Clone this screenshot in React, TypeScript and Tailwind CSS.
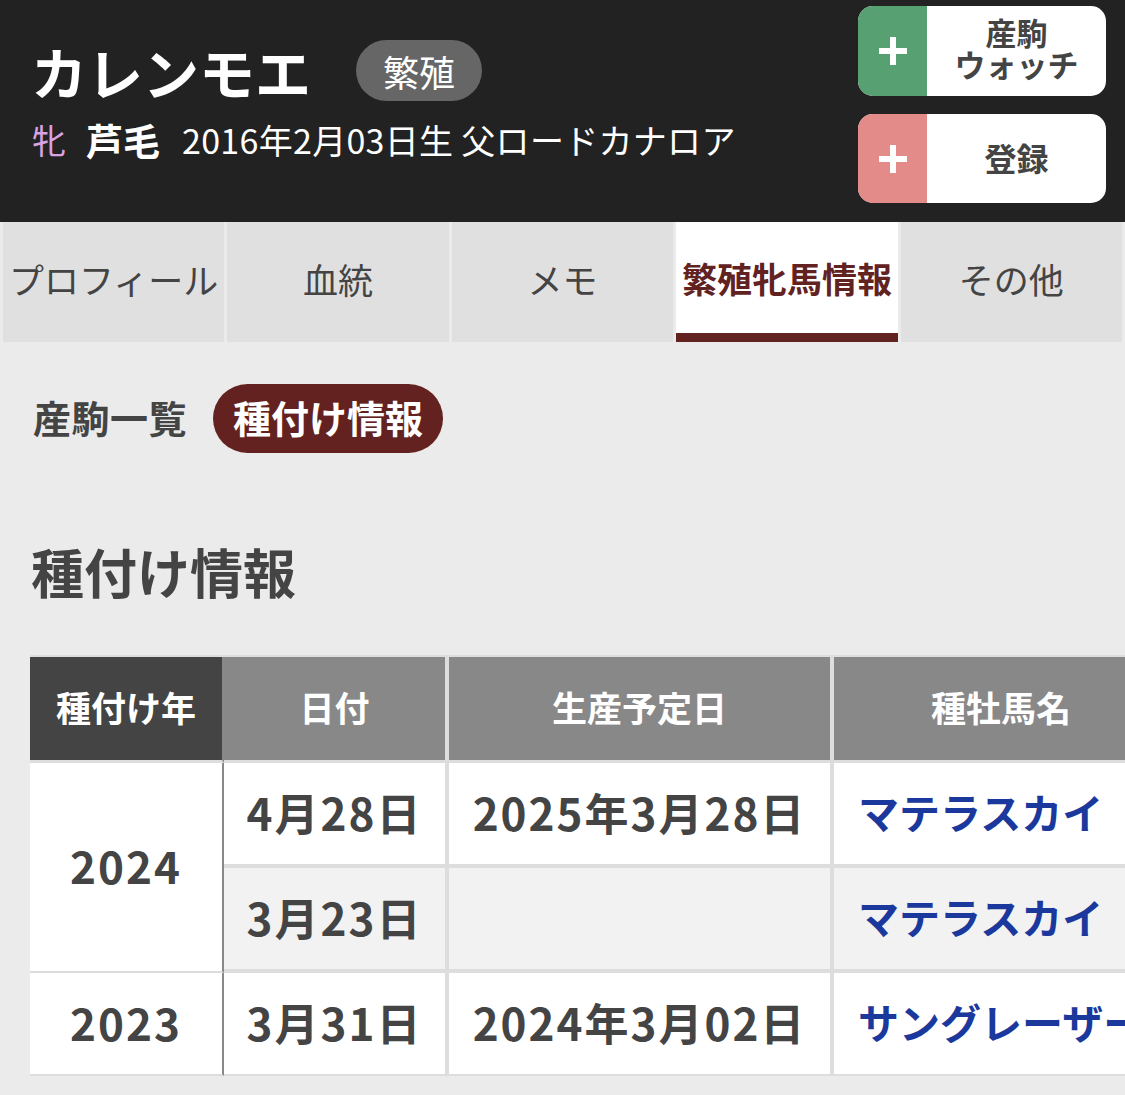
import React from "react";

function PlusMark() {
  return (
    <svg width="30" height="30" viewBox="0 0 30 30" aria-hidden="true">
      <rect x="12" y="1" width="6" height="28" fill="#fff" />
      <rect x="1" y="12" width="28" height="6" fill="#fff" />
    </svg>
  );
}

export default function App() {
  const tabs = ["プロフィール", "血統", "メモ", "繁殖牝馬情報", "その他"];
  const cellBase = "flex items-center whitespace-nowrap leading-none";
  const data = "text-[44px] font-bold tracking-[2px] pb-[4px]";
  const horse = "text-[41px] font-bold pb-[4px] text-[#1b389c]";
  const head = "text-white text-[35px] font-bold pb-[4px]";
  return (
    <div className="w-full min-h-screen overflow-hidden bg-[#ebebeb] font-['Noto_Sans_CJK_JP','Noto_Sans',sans-serif] text-[#444]">
      {/* Header */}
      <div className="h-[222px] bg-[#222222] flex justify-between">
        <div className="pl-[31px] pt-[40px]">
          <div className="flex items-center h-[61px]">
            <span className="text-[56px] font-bold text-white leading-none">カレンモエ</span>
            <span className="ml-[45px] h-[61px] px-[27px] rounded-full bg-[#666666] text-white text-[36px] leading-none flex items-center">繁殖</span>
          </div>
          <div className="mt-[19px] flex items-center h-[40px] text-[34px] leading-none whitespace-nowrap">
            <span className="text-[#d9a3e3] ml-[1px]">牝</span>
            <span className="ml-[20px] text-white font-bold text-[37px]">芦毛</span>
            <span className="ml-[22px] text-white tracking-[0.3px]">2016年2月03日生 父ロードカナロア</span>
          </div>
        </div>
        <div className="pt-[6px] pr-[19px] flex flex-col gap-[18px]">
          <div className="w-[248px] h-[90px] rounded-[15px] overflow-hidden flex bg-white">
            <div className="w-[69px] bg-[#57a072] flex items-center justify-center">
              <PlusMark />
            </div>
            <div className="flex-1 flex flex-col items-center justify-center font-bold text-[31px] leading-[32px] text-[#444] pb-[6px]">
              <span>産駒</span>
              <span>ウォッチ</span>
            </div>
          </div>
          <div className="w-[248px] h-[89px] rounded-[15px] overflow-hidden flex bg-white">
            <div className="w-[69px] bg-[#e28b88] flex items-center justify-center">
              <PlusMark />
            </div>
            <div className="flex-1 flex items-center justify-center font-bold text-[32px] leading-none text-[#444] pb-[4px]">
              登録
            </div>
          </div>
        </div>
      </div>

      {/* Tabs */}
      <div className="grid grid-cols-5 gap-[3px] px-[3px] h-[120px]">
        {tabs.map((t, i) =>
          i === 3 ? (
            <div key={t} className="bg-white flex flex-col">
              <div className="flex-1 flex items-center justify-center text-[35px] font-bold text-[#62221f] leading-none whitespace-nowrap">{t}</div>
              <div className="h-[9px] bg-[#62221f]" />
            </div>
          ) : (
            <div key={t} className="bg-[#e0e0e0] flex items-center justify-center text-[35px] leading-none text-[#444] whitespace-nowrap pb-[7px]">
              {t}
            </div>
          )
        )}
      </div>

      {/* Sub nav */}
      <div className="mt-[42px] pl-[33px] flex items-center h-[69px]">
        <span className="text-[38px] font-bold leading-none text-[#444] tracking-[0.5px] pb-[4px]">産駒一覧</span>
        <span className="ml-[26px] h-[69px] px-[20px] rounded-full bg-[#63221f] text-white text-[38px] font-bold leading-none flex items-center pb-[4px]">種付け情報</span>
      </div>

      {/* Heading */}
      <h2 className="mt-[92px] pl-[31px] text-[53px] font-bold leading-none text-[#444]">種付け情報</h2>

      {/* Table */}
      <div className="mt-[57px] ml-[30px] w-[1174px] border-t-2 border-[#dddddd] grid grid-cols-[194px_225px_385px_370px] grid-rows-[106px_105px_105px_103px]">
        {/* header */}
        <div className={`${cellBase} ${head} justify-center bg-[#444444] border-r-2 border-r-[#888888] border-b-[3px] border-b-[#dddddd]`}>種付け年</div>
        <div className={`${cellBase} ${head} justify-center bg-[#888888] border-r-4 border-r-[#dddddd] border-b-[3px] border-b-[#dddddd]`}>日付</div>
        <div className={`${cellBase} ${head} justify-center bg-[#888888] border-r-4 border-r-[#dddddd] border-b-[3px] border-b-[#dddddd]`}>生産予定日</div>
        <div className={`${cellBase} ${head} justify-start pl-[97px] bg-[#888888] border-b-[3px] border-b-[#dddddd]`}>種牡馬名</div>

        {/* row 1 */}
        <div className={`${cellBase} ${data} justify-center row-span-2 bg-white border-r-2 border-r-[#888888] border-b-2 border-b-[#dddddd]`}>2024</div>
        <div className={`${cellBase} ${data} justify-center bg-white border-r-4 border-r-[#dddddd] border-b-4 border-b-[#dddddd]`}>4月28日</div>
        <div className={`${cellBase} ${data} justify-center bg-white border-r-4 border-r-[#dddddd] border-b-4 border-b-[#dddddd]`}>2025年3月28日</div>
        <div className={`${cellBase} ${horse} justify-start pl-[24px] bg-white border-b-4 border-b-[#dddddd]`}>マテラスカイ</div>

        {/* row 2 */}
        <div className={`${cellBase} ${data} justify-center bg-[#f2f2f2] border-r-4 border-r-[#dddddd] border-b-4 border-b-[#dddddd]`}>3月23日</div>
        <div className={`${cellBase} ${data} justify-center bg-[#f2f2f2] border-r-4 border-r-[#dddddd] border-b-4 border-b-[#dddddd]`}></div>
        <div className={`${cellBase} ${horse} justify-start pl-[24px] bg-[#f2f2f2] border-b-4 border-b-[#dddddd]`}>マテラスカイ</div>

        {/* row 3 */}
        <div className={`${cellBase} ${data} justify-center bg-white border-r-2 border-r-[#888888] border-b-2 border-b-[#dddddd]`}>2023</div>
        <div className={`${cellBase} ${data} justify-center bg-white border-r-4 border-r-[#dddddd] border-b-2 border-b-[#dddddd]`}>3月31日</div>
        <div className={`${cellBase} ${data} justify-center bg-white border-r-4 border-r-[#dddddd] border-b-2 border-b-[#dddddd]`}>2024年3月02日</div>
        <div className={`${cellBase} ${horse} justify-start pl-[24px] bg-white border-b-2 border-b-[#dddddd]`}>サングレーザー</div>
      </div>
    </div>
  );
}
